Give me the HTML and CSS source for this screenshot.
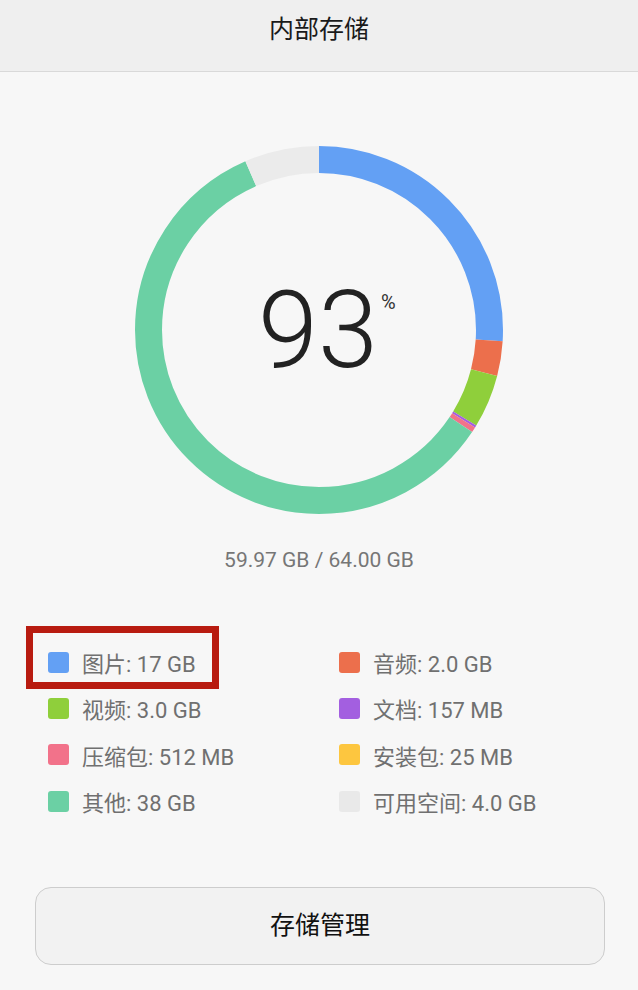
FILE: index.html
```html
<!DOCTYPE html>
<html lang="zh-CN">
<head>
<meta charset="utf-8">
<title>内部存储</title>
<link rel="stylesheet" href="styles.css">
</head>
<body>
<header class="topbar"><h1 class="title">内部存储</h1></header>
<main class="content">
  <section class="ring-wrap">
    <svg class="ring" width="368" height="368" viewBox="0 0 368 368" aria-hidden="true">
      <g transform="rotate(-90 184 184)" fill="none" stroke-width="27">
        <circle cx="184" cy="184" r="170.5" pathLength="360" stroke="#63a0f4" stroke-dasharray="93.5 266.5" stroke-dashoffset="0"/>
        <circle cx="184" cy="184" r="170.5" pathLength="360" stroke="#ec6f4c" stroke-dasharray="11 349" stroke-dashoffset="-93.5"/>
        <circle cx="184" cy="184" r="170.5" pathLength="360" stroke="#8fcf3b" stroke-dasharray="16.8 343.2" stroke-dashoffset="-104.5"/>
        <circle cx="184" cy="184" r="170.5" pathLength="360" stroke="#a35fe0" stroke-dasharray="0.7 359.3" stroke-dashoffset="-121.3"/>
        <circle cx="184" cy="184" r="170.5" pathLength="360" stroke="#f2728a" stroke-dasharray="1.7 358.3" stroke-dashoffset="-122"/>
        <circle cx="184" cy="184" r="170.5" pathLength="360" stroke="#6bd0a4" stroke-dasharray="212.7 147.3" stroke-dashoffset="-123.7"/>
        <circle cx="184" cy="184" r="170.5" pathLength="360" stroke="#ebebeb" stroke-dasharray="23.6 336.4" stroke-dashoffset="-336.4"/>
      </g>
    </svg>
    <div class="ring-center"><span class="pct">93<span class="pct-sign">%</span></span></div>
  </section>
  <p class="usage">59.97 GB / 64.00 GB</p>
  <ul class="legend">
    <li class="item highlighted"><span class="swatch sw-blue"></span>图片: 17 GB</li>
    <li class="item"><span class="swatch sw-orange"></span>音频: 2.0 GB</li>
    <li class="item"><span class="swatch sw-lime"></span>视频: 3.0 GB</li>
    <li class="item"><span class="swatch sw-purple"></span>文档: 157 MB</li>
    <li class="item"><span class="swatch sw-pink"></span>压缩包: 512 MB</li>
    <li class="item"><span class="swatch sw-yellow"></span>安装包: 25 MB</li>
    <li class="item"><span class="swatch sw-teal"></span>其他: 38 GB</li>
    <li class="item"><span class="swatch sw-gray"></span>可用空间: 4.0 GB</li>
  </ul>
  <div class="actions"><button class="manage-btn" type="button">存储管理</button></div>
</main>
</body>
</html>
```
FILE: styles.css
```css
*, *::before, *::after { box-sizing: border-box; }
html, body { margin: 0; padding: 0; }
body {
  width: 638px;
  min-height: 990px;
  background: #f7f7f7;
  font-family: "Roboto", "Noto Sans CJK SC", sans-serif;
  color: #222;
}
.topbar {
  height: 72px;
  background: #efefef;
  border-bottom: 1px solid #d9d9d9;
  display: flex;
  justify-content: center;
  padding-top: 14px;
}
.title {
  margin: 0;
  font-size: 25px;
  line-height: 26px;
  font-weight: 400;
  color: #1a1a1a;
  font-family: "Noto Sans CJK SC", sans-serif;
}
.content { display: flex; flex-direction: column; }
.ring-wrap {
  margin: 74px auto 0;
  width: 368px;
  height: 368px;
  display: grid;
}
.ring, .ring-center { grid-area: 1 / 1; }
.ring { display: block; }
.ring-center {
  display: flex;
  align-items: center;
  justify-content: center;
  padding-right: 2px;
}
.pct {
  position: relative;
  font-size: 108px;
  line-height: 108px;
  font-weight: 300;
  color: #222;
}
.pct-sign {
  position: absolute;
  left: 100%;
  top: 16px;
  margin-left: 3px;
  font-size: 20px;
  line-height: 20px;
  font-weight: 400;
  color: #333;
}
.usage {
  margin: 34px 0 0;
  text-align: center;
  font-size: 21px;
  line-height: 24px;
  color: #767676;
}
.legend {
  list-style: none;
  margin: 67px 0 0;
  padding: 0 0 0 48px;
  display: grid;
  grid-template-columns: 291px 1fr;
  grid-auto-rows: 46.33px;
}
.item {
  position: relative;
  display: flex;
  align-items: center;
  gap: 13px;
  font-size: 22px;
  color: #707070;
  white-space: nowrap;
}
.swatch {
  width: 21px;
  height: 21px;
  border-radius: 3px;
  flex: none;
}
.sw-blue { background: #63a0f4; }
.sw-orange { background: #ec6f4c; }
.sw-lime { background: #8fcf3b; }
.sw-purple { background: #a35fe0; }
.sw-pink { background: #f2728a; }
.sw-yellow { background: #fdc63f; }
.sw-teal { background: #6bd0a4; }
.sw-gray { background: #e9e9e9; }
.highlighted::before {
  content: "";
  position: absolute;
  left: -22px;
  top: -13px;
  width: 193px;
  height: 63px;
  border: 7px solid #b81b10;
}
.actions { padding: 63px 33px 0 35px; }
.manage-btn {
  width: 570px;
  height: 78px;
  border: 1px solid #cdcdcd;
  border-radius: 16px;
  background: #f2f2f2;
  font-family: "Noto Sans CJK SC", sans-serif;
  font-size: 25px;
  color: #111;
  padding: 0 0 6px;
}
```
